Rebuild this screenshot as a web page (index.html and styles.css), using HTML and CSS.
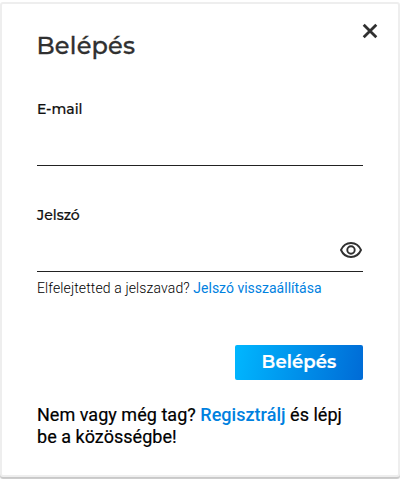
FILE: index.html
```html
<!DOCTYPE html>
<html lang="hu">
<head>
<meta charset="utf-8">
<title>Belépés</title>
<link rel="stylesheet" href="styles.css">
</head>
<body>
<main class="card">
  <header class="header">
    <h1 class="title">Belépés</h1>
    <button class="close" type="button" aria-label="Bezárás">
      <svg width="16" height="16" viewBox="0 0 16 16"><path d="M1.7 1.7 14.3 14.3M14.3 1.7 1.7 14.3"/></svg>
    </button>
  </header>
  <form class="form">
    <label class="label" for="email">E-mail</label>
    <div class="field"><input id="email" type="email"></div>
    <label class="label label-password" for="password">Jelszó</label>
    <div class="field">
      <input id="password" type="password">
      <svg class="eye" width="22" height="16" viewBox="0 0 22 16"><path d="M1 8C3 3.500 6.600 1 11 1s8 2.500 10 7c-2 4.500-5.600 7-10 7S3 12.500 1 8Z"/><circle cx="11" cy="8" r="3.700"/></svg>
    </div>
    <p class="forgot">Elfelejtetted a jelszavad? <a href="#">Jelszó visszaállítása</a></p>
    <button class="submit" type="button">Belépés</button>
  </form>
  <p class="register">Nem vagy még tag? <a href="#">Regisztrálj</a> és lépj be a közösségbe!</p>
</main>
</body>
</html>
```
FILE: styles.css
```css
* { box-sizing: border-box; }
body {
  margin: 0;
  padding-top: 2px;
  height: 479px;
  overflow: hidden;
  background: #fff;
  color: #101010;
  font-family: Roboto, sans-serif;
}
.card {
  height: 475px;
  padding: 0 35px;
  border: 2px solid #eee;
  border-radius: 3px;
  background: #fff;
  box-shadow: 0 2px 1px #c8c8c8;
}
.header {
  display: flex;
  justify-content: space-between;
  height: 95px;
}
.title {
  margin: 27px 0 0 -.5px;
  font: 500 24px/30px Montserrat, Inter, sans-serif;
  letter-spacing: .2px;
  color: #303030;
  -webkit-text-stroke: .3px #303030;
}
.close {
  width: 16px;
  height: 16px;
  margin: 19px -15px 0 0;
  padding: 0;
  border: 0;
  background: none;
}
.close svg { display: block; fill: none; stroke: #303030; stroke-width: 2.8; }
.form { display: flex; flex-direction: column; }
.label {
  height: 20px;
  font: 500 14px/20px Montserrat, Inter, sans-serif;
  -webkit-text-stroke: .2px currentColor;
}
.label-password { margin-top: 39px; }
.field {
  display: flex;
  align-items: center;
  height: 47px;
  border-bottom: 1px solid #222;
}
.field input {
  flex: 1;
  min-width: 0;
  height: 36px;
  padding: 0;
  border: 0;
  outline: 0;
  background: none;
}
.eye { margin: 3px 1px 0 0; fill: none; stroke: #303030; stroke-width: 1.9; }
.forgot {
  margin: 6px 0 0;
  font-weight: 300;
  font-size: 14px;
  line-height: 20px;
  letter-spacing: .12px;
  color: #000;
  white-space: nowrap;
}
a { color: #0081df; text-decoration: none; }
.forgot a { font-weight: 400; letter-spacing: 0; }
.submit {
  align-self: flex-end;
  width: 128px;
  height: 35px;
  margin-top: 47px;
  padding: 0;
  border: 0;
  border-radius: 2px;
  background: linear-gradient(100deg, #00b7ff, #006bd6);
  color: #fff;
  font: 600 18px/35px Montserrat, Inter, sans-serif;
  letter-spacing: .1px;
  -webkit-text-stroke: .2px #fff;
}
.register {
  margin: 24px 0 0;
  font-size: 18px;
  line-height: 22px;
  letter-spacing: .03px;
  color: #000;
  -webkit-text-stroke: .2px currentColor;
}
.register a { font-weight: 500; -webkit-text-stroke: 0; }
```
